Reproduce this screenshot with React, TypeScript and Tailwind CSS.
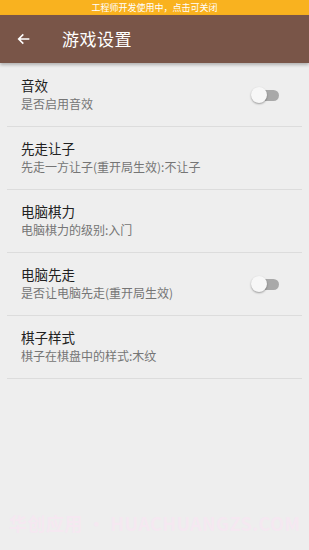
const font = { fontFamily: '"Noto Sans CJK SC", "Noto Sans", sans-serif' };

type Item = { title: string; summary: string; toggle?: boolean };

const items: Item[] = [
  { title: "音效", summary: "是否启用音效", toggle: true },
  { title: "先走让子", summary: "先走一方让子(重开局生效):不让子" },
  { title: "电脑棋力", summary: "电脑棋力的级别:入门" },
  { title: "电脑先走", summary: "是否让电脑先走(重开局生效)", toggle: true },
  { title: "棋子样式", summary: "棋子在棋盘中的样式:木纹" },
];

function Toggle() {
  return (
    <div className="relative w-[30px] h-[16px] mr-[28px]">
      <div className="absolute left-[6px] top-[3px] w-[22px] h-[11px] rounded-full bg-[#a9a9a9]" />
      <div className="absolute left-0 top-0 w-[16px] h-[16px] rounded-full bg-[#f7f7f7] shadow-[0_1px_2px_rgba(0,0,0,0.35)]" />
    </div>
  );
}

export default function App() {
  return (
    <div className="w-[309px] h-[550px] bg-[#eeeeee] flex flex-col overflow-hidden" style={font}>
      <div className="h-[15px] bg-[#f9b21f] flex items-center justify-center text-white text-[9px] leading-none">
        工程师开发使用中，点击可关闭
      </div>
      <div className="h-[48px] bg-[#795548] flex items-center shadow-[0_2px_3px_rgba(0,0,0,0.25)] z-10">
        <svg width="16" height="16" viewBox="0 0 24 24" className="ml-[16px]" fill="none" stroke="#ffffff" strokeWidth="2.4">
          <path d="M20 12H5M11 5l-7 7 7 7" />
        </svg>
        <span className="ml-[30px] text-white text-[17px] tracking-[0.5px]">游戏设置</span>
      </div>
      <div className="flex flex-col pt-[1px]">
        {items.map((it) => (
          <div key={it.title} className="flex flex-col">
            <div className="h-[62px] flex items-center pl-[21px]">
              <div className="flex-1 flex flex-col gap-0 pb-[2px]">
                <span className="text-[13.5px] leading-[19px] text-[#212121]">{it.title}</span>
                <span className="text-[12px] leading-[17px] text-[#757575]">{it.summary}</span>
              </div>
              {it.toggle && <Toggle />}
            </div>
            <div className="mx-[7px] h-px bg-[#dcdcdc]" />
          </div>
        ))}
      </div>
      <div className="mt-auto mb-[13px] flex justify-center text-[18px] font-bold text-[#f5e8f1] tracking-[0.5px] whitespace-nowrap">
        华创应用 · HUACHUANGZS.COM
      </div>
    </div>
  );
}
